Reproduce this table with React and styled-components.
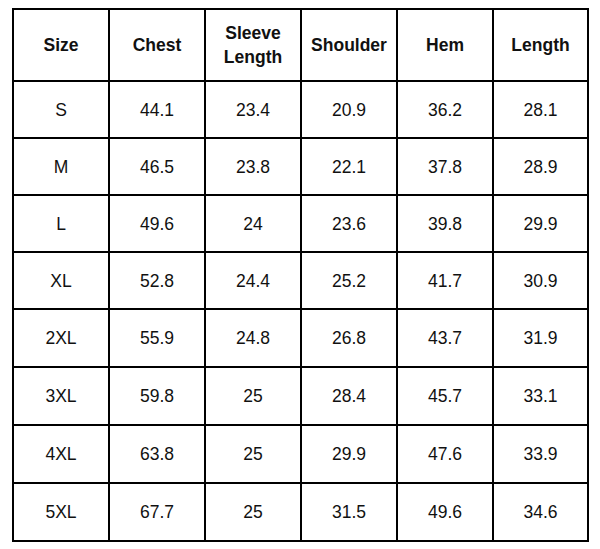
import React from 'react';
import styled, { createGlobalStyle } from 'styled-components';

const GlobalStyle = createGlobalStyle`
  body {
    margin: 0;
    background: #ffffff;
    font-family: 'Liberation Sans', Arial, sans-serif;
  }
`;

const Page = styled.div`
  padding: 8px 0 0 12px;
`;

const Grid = styled.div`
  display: grid;
  grid-template-columns: repeat(5, 94px) 93px;
  grid-template-rows: 70px repeat(4, 55px) repeat(4, 56px);
  gap: 2px;
  padding: 2px;
  width: max-content;
  background: #000;
`;

const Cell = styled.div`
  background: #fff;
  display: flex;
  align-items: center;
  justify-content: center;
  text-align: center;
  font-size: 17.5px;
  line-height: 24px;
  color: #111;
  font-weight: ${(p) => (p.$head ? 700 : 400)};
`;

const headers = ['Size', 'Chest', 'Sleeve Length', 'Shoulder', 'Hem', 'Length'];

const rows = [
  ['S', '44.1', '23.4', '20.9', '36.2', '28.1'],
  ['M', '46.5', '23.8', '22.1', '37.8', '28.9'],
  ['L', '49.6', '24', '23.6', '39.8', '29.9'],
  ['XL', '52.8', '24.4', '25.2', '41.7', '30.9'],
  ['2XL', '55.9', '24.8', '26.8', '43.7', '31.9'],
  ['3XL', '59.8', '25', '28.4', '45.7', '33.1'],
  ['4XL', '63.8', '25', '29.9', '47.6', '33.9'],
  ['5XL', '67.7', '25', '31.5', '49.6', '34.6'],
];

export default function App() {
  return (
    <Page>
      <GlobalStyle />
      <Grid>
        {headers.map((h) => (
          <Cell key={h} $head>
            {h === 'Sleeve Length' ? (
              <span>
                Sleeve
                <br />
                Length
              </span>
            ) : (
              h
            )}
          </Cell>
        ))}
        {rows.map((r) => r.map((v, i) => <Cell key={r[0] + i}>{v}</Cell>))}
      </Grid>
    </Page>
  );
}
